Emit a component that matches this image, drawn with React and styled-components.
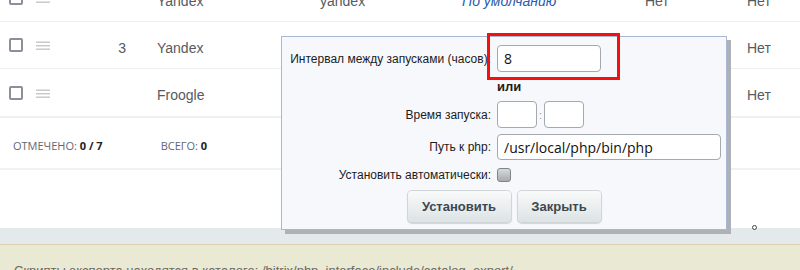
import React from "react";
import styled, { createGlobalStyle } from "styled-components";

const GlobalStyle = createGlobalStyle`
  html, body {
    margin: 0;
    padding: 0;
    background: #ffffff;
    overflow: hidden;
  }
  body {
    font-family: "Liberation Sans", Arial, sans-serif;
  }
`;

const Page = styled.div`
  position: relative;
  width: 800px;
  height: 270px;
  overflow: hidden;
  display: flex;
  flex-direction: column;

  & > * {
    flex-shrink: 0;
  }
`;

const Table = styled.div`
  margin-top: -25px;
  display: flex;
  flex-direction: column;
`;

const Row = styled.div`
  display: grid;
  grid-template-columns: 27px 64px 26px 31px 163px 142px 183px 102px 1fr;
  align-items: center;
  padding-left: 9px;
  padding-top: 5px;
  height: ${(p) => (p.$last ? "42px" : "41px")};
  border-bottom: ${(p) => (p.$last ? "2px solid #eef1f4" : "1px solid #eceef0")};
  font-size: 14px;
  color: #555b63;
`;

const RowCheck = styled.span`
  display: block;
  width: 10px;
  height: 10px;
  border: 2px solid #8e8d99;
  border-radius: 2px;
  margin-top: -5px;
`;

const Num = styled.span`
  text-align: right;
`;

const DefaultLink = styled.span`
  color: #2a5cae;
  font-style: italic;
`;

const Handle = () => (
  <svg width="14" height="10" viewBox="0 0 14 10" style={{ marginTop: -3 }}>
    <rect x="0" y="0.5" width="14" height="1.4" fill="#c4c6c9" />
    <rect x="0" y="4" width="14" height="1.4" fill="#c4c6c9" />
    <rect x="0" y="7.5" width="14" height="1.4" fill="#c4c6c9" />
  </svg>
);

const Footer = styled.div`
  height: 46px;
  padding-top: 4px;
  display: flex;
  align-items: center;
  padding-left: 13px;
  gap: 58px;
  font-family: "Open Sans", sans-serif;
  font-size: 11px;
  text-transform: uppercase;
  color: #5f6772;
  border-bottom: 2px solid #eef2f5;
`;

const Counter = styled.span`
  b {
    color: #222;
    font-weight: 700;
  }
`;

const Blank = styled.div`
  position: relative;
  height: 58px;
`;

const Dot = styled.span`
  position: absolute;
  left: 752px;
  bottom: -2px;
  width: 3px;
  height: 3px;
  border: 1px solid #444;
  border-radius: 50%;
  background: #fff;
`;

const Band = styled.div`
  height: 16px;
  background: #e4eaec;
  border-bottom: 1px solid #d8d1ac;
`;

const Note = styled.div`
  height: 40px;
  background: #e9e9d4;
  padding: 18px 0 0 14px;
  font-size: 13px;
  color: #6a6a5e;
  white-space: nowrap;
`;

const Dialog = styled.div`
  position: absolute;
  left: 281px;
  top: 36px;
  width: 446px;
  height: 194px;
  background: #f7f8fc;
  border: 1px solid #a9b7d4;
  box-shadow: 4px 4px 0 #aeb1b5;
  padding: 8px 0 0 8px;
  box-sizing: border-box;
  font-size: 12px;
  color: #1c1c1c;
`;

const Form = styled.div`
  display: grid;
  grid-template-columns: 201px 1fr;
  column-gap: 6px;
  align-items: center;
`;

const Label = styled.span`
  text-align: right;
  white-space: nowrap;
  margin-top: ${(p) => p.$mt || 0}px;
`;

const Field = styled.div`
  display: flex;
  align-items: center;
  gap: ${(p) => p.$gap || 0}px;
  margin-top: ${(p) => p.$mt || 0}px;
`;

const Input = styled.div`
  box-sizing: border-box;
  width: ${(p) => p.$w}px;
  height: ${(p) => p.$h || 27}px;
  background: #fff;
  border: 1px solid #a3a9ae;
  border-radius: 4px;
  padding-left: 6px;
  display: flex;
  align-items: center;
  font-family: "Open Sans", sans-serif;
  font-size: 14px;
  color: #111;
`;

const Colon = styled.span`
  color: #999;
  font-size: 11px;
`;

const Or = styled.div`
  height: 29px;
  display: flex;
  align-items: center;
  font-weight: 700;
  font-size: 13px;
`;

const Check = styled.span`
  display: block;
  width: 14px;
  height: 14px;
  box-sizing: border-box;
  border: 1px solid #7e848a;
  border-radius: 3px;
  background: linear-gradient(#d7dadd, #a6abb0);
`;

const Buttons = styled.div`
  display: flex;
  justify-content: center;
  gap: 7px;
  margin-top: 9px;
  padding-right: 8px;
`;

const Button = styled.div`
  box-sizing: border-box;
  width: ${(p) => p.$w}px;
  height: 31px;
  display: flex;
  align-items: center;
  justify-content: center;
  border-radius: 4px;
  background: linear-gradient(#f9fafa, #dce3e5);
  box-shadow: 0 0 0 1px #d0d6d8, 0 1px 1px 1px rgba(0, 0, 0, 0.15);
  font-weight: 700;
  font-size: 13px;
  color: #3d4750;
`;

const Highlight = styled.div`
  position: absolute;
  left: 487px;
  top: 33px;
  width: 133px;
  height: 47px;
  box-sizing: border-box;
  border: 3px solid #f50f0f;
`;

const rows = [
  { num: "", name: "Yandex", code: "yandex", def: true, a: "Нет", b: "Нет" },
  { num: "3", name: "Yandex", code: "", def: false, a: "", b: "Нет" },
  { num: "", name: "Froogle", code: "", def: false, a: "", b: "Нет" },
];

export default function App() {
  return (
    <Page>
      <GlobalStyle />
      <Table>
        {rows.map((r, i) => (
          <Row key={i} $last={i === rows.length - 1}>
            <RowCheck />
            <Handle />
            <Num>{r.num}</Num>
            <span />
            <span>{r.name}</span>
            <span>{r.code}</span>
            <span>{r.def && <DefaultLink>По умолчанию</DefaultLink>}</span>
            <span>{r.a}</span>
            <span>{r.b}</span>
          </Row>
        ))}
      </Table>
      <Footer>
        <Counter>
          Отмечено: <b>0 / 7</b>
        </Counter>
        <Counter>
          Всего: <b>0</b>
        </Counter>
      </Footer>
      <Blank>
        <Dot />
      </Blank>
      <Band />
      <Note>
        Скрипты экспорта находятся в каталоге: /bitrix/php_interface/include/catalog_export/
      </Note>

      <Dialog>
        <Form>
          <Label>Интервал между запусками (часов):</Label>
          <Field>
            <Input $w={104}>8</Input>
          </Field>
          <span />
          <Or>или</Or>
          <Label>Время запуска:</Label>
          <Field $gap={2}>
            <Input $w={40} />
            <Colon>:</Colon>
            <Input $w={40} />
          </Field>
          <Label $mt={6}>Путь к php:</Label>
          <Field $mt={6}>
            <Input $w={224} $h={26}>/usr/local/php/bin/php</Input>
          </Field>
          <Label $mt={8}>Установить автоматически:</Label>
          <Field $mt={8}>
            <Check />
          </Field>
        </Form>
        <Buttons>
          <Button $w={103}>Установить</Button>
          <Button $w={83}>Закрыть</Button>
        </Buttons>
      </Dialog>
      <Highlight />
    </Page>
  );
}
